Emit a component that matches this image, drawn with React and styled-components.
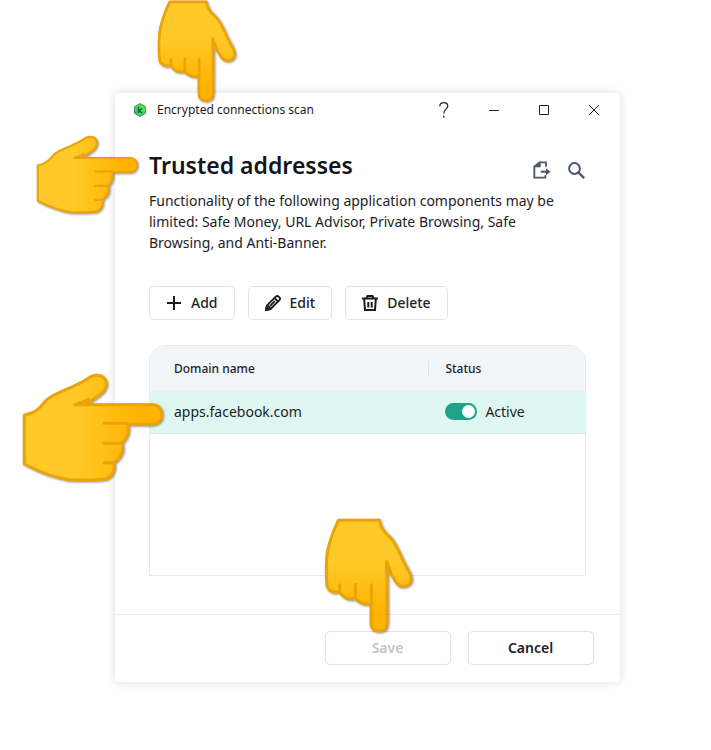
import { useState } from 'react';
import styled, { createGlobalStyle } from 'styled-components';

const GlobalStyle = createGlobalStyle`
	* {
		box-sizing: border-box;
	}
	body {
		margin: 0;
		background: #fff;
		color: #1d1d25;
		font-family: 'Noto Sans', 'Open Sans', sans-serif;
	}
	button {
		font-family: inherit;
		cursor: pointer;
	}
`;

const Page = styled.div`
	position: relative;
	min-height: 100vh;
	padding: 93px 91px 68px 115px;
	overflow: hidden;
`;

const Dialog = styled.main`
	background: #fff;
	border-radius: 4px;
	box-shadow: 0 0 10px rgba(0, 0, 0, 0.14);
`;

const TitleBar = styled.header`
	display: flex;
	align-items: center;
	height: 34px;
	padding: 0 1px 0 18px;
	.caption {
		flex: 1;
		margin-left: 10px;
		font-size: 12px;
		line-height: 16px;
		white-space: nowrap;
	}
`;

const WindowButton = styled.button`
	display: flex;
	align-items: center;
	justify-content: center;
	width: 50px;
	height: 34px;
	padding: 0;
	border: none;
	background: none;
	color: #222;
`;

const Content = styled.section`
	padding: 18px 34px 38px;
`;

const Heading = styled.div`
	display: flex;
	align-items: center;
	justify-content: space-between;
	height: 40px;
	h1 {
		margin: 0;
		font-size: 23px;
		font-weight: 600;
		line-height: 40px;
		color: #14141c;
	}
	.tools {
		display: flex;
		gap: 14px;
		padding-top: 10px;
	}
`;

const IconButton = styled.button`
	display: flex;
	align-items: center;
	justify-content: center;
	width: 20px;
	height: 20px;
	padding: 0;
	border: none;
	background: none;
	color: #4f5965;
`;

const Description = styled.p`
	max-width: 420px;
	margin: 5px 0 33px;
	font-size: 14px;
	line-height: 21px;
`;

const Toolbar = styled.div`
	display: flex;
	gap: 13px;
	margin-bottom: 25px;
`;

const Button = styled.button`
	display: flex;
	align-items: center;
	justify-content: center;
	gap: 8px;
	height: 34px;
	min-width: ${({ $wide }) => ($wide ? '126px' : '0')};
	padding: 0 16px 0 15px;
	border: 1px solid #dfe2e9;
	border-radius: 5px;
	background: #fff;
	color: #1d1d25;
	font-size: 14px;
	font-weight: ${({ $wide }) => ($wide ? 600 : 500)};
	line-height: 20px;
	&:disabled {
		color: #bfc3ca;
		cursor: default;
	}
`;

const TableBox = styled.div`
	min-height: 231px;
	border: 1px solid #e6eaee;
	border-radius: 16px 16px 0 0;
	overflow: hidden;
`;

const Table = styled.table`
	width: 100%;
	border-collapse: collapse;
	table-layout: fixed;
	th,
	td {
		padding: 0 17px;
		text-align: left;
		&:first-child {
			width: 64%;
			padding-left: 24px;
		}
	}
	th {
		height: 45px;
		background: #f2f6f9;
		font-size: 12px;
		font-weight: 500;
	}
	th:last-child {
		background: linear-gradient(#dfe4ea, #dfe4ea) left center / 1px 16px no-repeat #f2f6f9;
	}
	td {
		height: 42px;
		border-bottom: 1px solid #cfebe6;
		background: #def7f2;
		font-size: 14px;
	}
`;

const Switch = styled.label`
	display: flex;
	align-items: center;
	gap: 8px;
	line-height: 20px;
	input {
		appearance: none;
		display: flex;
		align-items: center;
		justify-content: ${({ $on }) => ($on ? 'flex-end' : 'flex-start')};
		width: 32px;
		height: 17px;
		margin: 0;
		padding: 2px;
		border-radius: 9px;
		background: ${({ $on }) => ($on ? '#1fa287' : '#aeb5bd')};
		&::before {
			content: '';
			width: 13px;
			height: 13px;
			border-radius: 50%;
			background: #fff;
		}
	}
`;

const Footer = styled.footer`
	display: flex;
	justify-content: flex-end;
	gap: 17px;
	padding: 16px 26px 17px;
	border-top: 1px solid #e8edf0;
`;

const Pointer = styled.svg`
	position: absolute;
	top: ${({ $top }) => $top}px;
	left: ${({ $left }) => $left}px;
	filter: drop-shadow(1px 1px 1px rgba(0, 0, 0, 0.4));
	pointer-events: none;
	path {
		stroke: #eba309;
		stroke-width: 9;
		stroke-linecap: round;
		stroke-linejoin: round;
	}
`;

const Logo = () => (
	<svg width='14' height='16' viewBox='0 0 14 16'>
		<defs>
			<linearGradient id='logo-fill' x1='0' y1='1' x2='1' y2='0'>
				<stop offset='0' stopColor='#1fc98f' />
				<stop offset='1' stopColor='#6be52f' />
			</linearGradient>
		</defs>
		<path d='M7 1.5 12.6 4.7V11.3L7 14.5 1.4 11.3V4.7Z' fill='url(#logo-fill)' stroke='#3b7754' strokeWidth='0.8' strokeLinejoin='round' />
		<path d='M5.5 5V11M8.8 6.5 6 8.7 9 11' fill='none' stroke='#12623a' strokeWidth='1.4' />
	</svg>
);

const HandRight = ({ top, left, width, height }) => (
	<Pointer $top={top} $left={left} width={width} height={height} viewBox='30 15 441 345' aria-hidden='true'>
		<defs>
			<linearGradient id='hand-right-fill'>
				<stop offset='0.35' stopColor='#ffca28' />
				<stop offset='0.85' stopColor='#ffb300' />
			</linearGradient>
		</defs>
		<path
			fill='url(#hand-right-fill)'
			d='M46 150C75 144 90 134 106 112C118 97 132 91 150 83C180 70 210 58 236 41C253 28 273 28 284 38C296 50 293 69 282 80C267 96 247 107 226 119H428C447 119 458 131 458 148C458 166 447 177 428 178H356C361 201 354 220 339 233C345 260 336 279 315 292C319 315 309 334 292 341C270 345 220 346 180 344C130 337 88 319 46 297Z'
		/>
		<path fill='none' d='M198 119H235M198 118C212 113 225 109 238 103M284 175H356M284 235H339M285 293H315' />
	</Pointer>
);

const HandDown = ({ top, left, width, height }) => (
	<Pointer $top={top} $left={left} width={width} height={height} viewBox='24 21 285 360' aria-hidden='true'>
		<defs>
			<linearGradient id='hand-down-fill' x1='0' y1='0' x2='0' y2='1'>
				<stop offset='0.35' stopColor='#ffca28' />
				<stop offset='0.85' stopColor='#ffb300' />
			</linearGradient>
		</defs>
		<path
			fill='url(#hand-down-fill)'
			d='M73 34H196C199 55 208 68 225 82C242 97 250 118 260 139C267 158 280 177 288 195C296 213 289 229 273 231C259 234 250 227 244 216C236 202 228 190 219 172V341C219 357 210 366 195 366C179 366 171 357 171 341V283C152 288 136 282 124 268C104 273 88 266 77 248C57 253 42 245 39 229C36 200 37 162 39 138C44 98 58 66 73 34Z'
		/>
		<path fill='none' d='M77 227V248M124 226V268M172 227V284M218 157V190M219 158C222 168 226 178 231 192' />
	</Pointer>
);

const AddIcon = () => (
	<svg width='18' height='18' viewBox='0 0 18 18'>
		<path d='M9 2V16M2 9H16' fill='none' stroke='currentColor' strokeWidth='2' />
	</svg>
);

const EditIcon = () => (
	<svg width='18' height='18' viewBox='0 0 18 18' fill='none' stroke='currentColor' strokeWidth='1.9' strokeLinejoin='round'>
		<path d='M1.8 16.2 3 11.4 11.8 2.6Q13.2 1.2 14.6 2.6L15.4 3.4Q16.8 4.8 15.4 6.2L6.6 15Z' />
		<path d='M10.4 4 14 7.6M3.4 11.4 6.8 14.6M6 12 10.8 7.2' />
		<path d='M2 16 2.7 13.2 4.8 15.3Z' fill='currentColor' />
	</svg>
);

const DeleteIcon = () => (
	<svg width='18' height='18' viewBox='0 0 18 18' fill='none' stroke='currentColor' strokeWidth='2'>
		<path d='M1 4.6H17M5.6 4.2 6.4 2H11.6L12.4 4.2' />
		<path d='M3.2 5 4 16H14L14.8 5M7.3 8V13.4M10.7 8V13.4' />
	</svg>
);

const ExportIcon = () => (
	<svg width='20' height='20' viewBox='401 227 60 60'>
		<path d='M443 247V234H425L408 247V280H441V273' fill='none' stroke='currentColor' strokeWidth='5.5' />
		<path d='M407 249V245L422 232H427V249Z' fill='currentColor' />
		<path d='M427 262H448' stroke='currentColor' strokeWidth='6' />
		<path d='M443 252 457 262 443 273Z' fill='currentColor' />
	</svg>
);

const SearchIcon = () => (
	<svg width='20' height='20' viewBox='0 0 20 20' fill='none' stroke='currentColor'>
		<circle cx='8.5' cy='8.5' r='5.4' strokeWidth='2' />
		<path d='M12.3 12.3 18.2 18.2' strokeWidth='2.4' />
	</svg>
);

const App = () => {
	const [active, setActive] = useState(true);

	return (
		<Page>
			<GlobalStyle />
			<Dialog>
				<TitleBar>
					<Logo />
					<span className='caption'>Encrypted connections scan</span>
					<WindowButton aria-label='Help'>
						<svg width='12' height='18' viewBox='0 0 12 18' fill='none' stroke='currentColor' strokeWidth='1.2'>
							<path d='M1.8 5.4C1.8 2.8 3.4 1.6 5.8 1.6S9.8 3 9.8 5.1C9.8 8.2 5.8 8.3 5.8 12.5' />
							<path d='M5.8 14.8V16.4' strokeWidth='1.5' />
						</svg>
					</WindowButton>
					<WindowButton aria-label='Minimize'>
						<svg width='12' height='12' viewBox='0 0 12 12' stroke='currentColor'>
							<path d='M1 6.5H11' />
						</svg>
					</WindowButton>
					<WindowButton aria-label='Maximize'>
						<svg width='12' height='12' viewBox='0 0 12 12' fill='none' stroke='currentColor'>
							<path d='M1.5 1.5H10.5V10.5H1.5Z' />
						</svg>
					</WindowButton>
					<WindowButton aria-label='Close'>
						<svg width='12' height='12' viewBox='0 0 12 12' fill='none' stroke='currentColor'>
							<path d='M1 1 11 11M11 1 1 11' />
						</svg>
					</WindowButton>
				</TitleBar>

				<Content>
					<Heading>
						<h1>Trusted addresses</h1>
						<div className='tools'>
							<IconButton aria-label='Export'>
								<ExportIcon />
							</IconButton>
							<IconButton aria-label='Search'>
								<SearchIcon />
							</IconButton>
						</div>
					</Heading>
					<Description>
						Functionality of the following application components may be limited: Safe Money, URL Advisor, Private
						Browsing, Safe Browsing, and Anti-Banner.
					</Description>

					<Toolbar>
						<Button>
							<AddIcon />
							Add
						</Button>
						<Button>
							<EditIcon />
							Edit
						</Button>
						<Button>
							<DeleteIcon />
							Delete
						</Button>
					</Toolbar>

					<TableBox>
						<Table>
							<thead>
								<tr>
									<th>Domain name</th>
									<th>Status</th>
								</tr>
							</thead>
							<tbody>
								<tr>
									<td>apps.facebook.com</td>
									<td>
										<Switch $on={active}>
											<input type='checkbox' checked={active} onChange={() => setActive(!active)} />
											Active
										</Switch>
									</td>
								</tr>
							</tbody>
						</Table>
					</TableBox>
				</Content>

				<Footer>
					<Button $wide disabled>
						Save
					</Button>
					<Button $wide>Cancel</Button>
				</Footer>
			</Dialog>

			{/* pointers over the dialog */}
			<HandDown top={-2} left={155} width={85} height={107} />
			<HandRight top={133} left={34} width={106} height={83} />
			<HandRight top={370} left={19} width={147} height={115} />
			<HandDown top={516} left={322} width={95} height={120} />
		</Page>
	);
};

export default App;
